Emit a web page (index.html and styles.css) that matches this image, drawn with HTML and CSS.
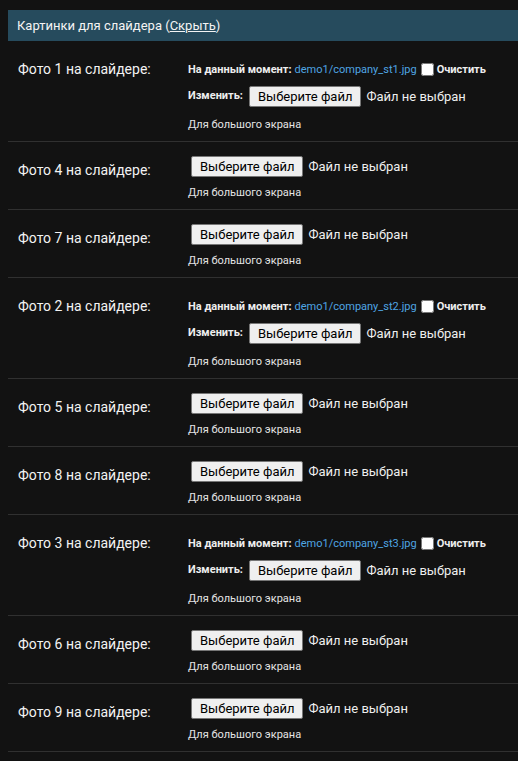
FILE: index.html
```html
<!DOCTYPE html>
<html lang="ru">
<head>
    <meta charset="UTF-8">
    <meta name="viewport" content="width=device-width, initial-scale=1.0">
    <title>Картинки для слайдера</title>
    <link rel="stylesheet" href="styles.css">
</head>
<body>

<fieldset class="module">
    <h2 class="caption">Картинки для слайдера (<a href="#" class="caption-toggle">Скрыть</a>)</h2>

    <div class="form-row">
        <label class="row-label">Фото 1 на слайдере:</label>
        <div class="field">
            <p class="current">
                <b>На данный момент:</b> <a href="#" class="file-link">demo1/company_st1.jpg</a><input type="checkbox" class="clear-box"><b>Очистить</b>
            </p>
            <p class="change">
                <b class="change-label">Изменить:</b>
                <span class="file-input"><button class="file-btn">Выберите файл</button><span class="file-name">Файл не выбран</span></span>
            </p>
            <div class="help current-help">Для большого экрана</div>
        </div>
    </div>

    <div class="form-row">
        <label class="row-label">Фото 4 на слайдере:</label>
        <div class="field">
            <span class="file-input plain"><button class="file-btn">Выберите файл</button><span class="file-name">Файл не выбран</span></span>
            <div class="help">Для большого экрана</div>
        </div>
    </div>

    <div class="form-row">
        <label class="row-label">Фото 7 на слайдере:</label>
        <div class="field">
            <span class="file-input plain"><button class="file-btn">Выберите файл</button><span class="file-name">Файл не выбран</span></span>
            <div class="help">Для большого экрана</div>
        </div>
    </div>

    <div class="form-row">
        <label class="row-label">Фото 2 на слайдере:</label>
        <div class="field">
            <p class="current">
                <b>На данный момент:</b> <a href="#" class="file-link">demo1/company_st2.jpg</a><input type="checkbox" class="clear-box"><b>Очистить</b>
            </p>
            <p class="change">
                <b class="change-label">Изменить:</b>
                <span class="file-input"><button class="file-btn">Выберите файл</button><span class="file-name">Файл не выбран</span></span>
            </p>
            <div class="help current-help">Для большого экрана</div>
        </div>
    </div>

    <div class="form-row">
        <label class="row-label">Фото 5 на слайдере:</label>
        <div class="field">
            <span class="file-input plain"><button class="file-btn">Выберите файл</button><span class="file-name">Файл не выбран</span></span>
            <div class="help">Для большого экрана</div>
        </div>
    </div>

    <div class="form-row">
        <label class="row-label">Фото 8 на слайдере:</label>
        <div class="field">
            <span class="file-input plain"><button class="file-btn">Выберите файл</button><span class="file-name">Файл не выбран</span></span>
            <div class="help">Для большого экрана</div>
        </div>
    </div>

    <div class="form-row">
        <label class="row-label">Фото 3 на слайдере:</label>
        <div class="field">
            <p class="current">
                <b>На данный момент:</b> <a href="#" class="file-link">demo1/company_st3.jpg</a><input type="checkbox" class="clear-box"><b>Очистить</b>
            </p>
            <p class="change">
                <b class="change-label">Изменить:</b>
                <span class="file-input"><button class="file-btn">Выберите файл</button><span class="file-name">Файл не выбран</span></span>
            </p>
            <div class="help current-help">Для большого экрана</div>
        </div>
    </div>

    <div class="form-row">
        <label class="row-label">Фото 6 на слайдере:</label>
        <div class="field">
            <span class="file-input plain"><button class="file-btn">Выберите файл</button><span class="file-name">Файл не выбран</span></span>
            <div class="help">Для большого экрана</div>
        </div>
    </div>

    <div class="form-row">
        <label class="row-label">Фото 9 на слайдере:</label>
        <div class="field">
            <span class="file-input plain"><button class="file-btn">Выберите файл</button><span class="file-name">Файл не выбран</span></span>
            <div class="help">Для большого экрана</div>
        </div>
    </div>
</fieldset>

</body>
</html>
```

FILE: styles.css
```css
*{
    box-sizing: border-box;
}

body{
    margin: 0;
    padding: 10px 0 0 8px;
    background-color: #121212;
    color: #eeeeee;
    font-family: Roboto, "Liberation Sans", sans-serif;
    overflow: hidden;
}

.module{
    margin: 0;
    padding: 0;
    border: none;
    min-width: 0;
}

.caption{
    margin: 0;
    height: 31px;
    padding: 0 10px 0 9px;
    display: flex;
    align-items: center;
    background-color: #264b5d;
    color: #f4f4f4;
    font-size: 13px;
    font-weight: 400;
}

.caption-toggle{
    color: #f4f4f4;
    text-decoration: underline;
}

.form-row{
    display: flex;
    padding: 14px 10px 10px 10px;
    border-bottom: 1px solid #303030;
}

.row-label{
    width: 170px;
    flex-shrink: 0;
    margin-top: 6px;
    font-size: 14px;
    line-height: 16px;
    color: #f2f2f2;
}

.field{
    display: flex;
    flex-direction: column;
    align-items: flex-start;
}

.current{
    margin: 0;
    height: 28px;
    display: flex;
    align-items: center;
    white-space: nowrap;
    font-size: 11px;
}

.current b,
.change b{
    font-weight: 700;
    color: #eeeeee;
}

.file-link{
    margin-left: 3px;
    color: #4fa5e3;
    text-decoration: none;
}

.clear-box{
    width: 13px;
    height: 13px;
    margin: 3px 3px 3px 4px;
}

.change{
    margin: 3px 0 0 0;
    display: flex;
    align-items: flex-start;
    white-space: nowrap;
    font-size: 11px;
}

.change-label{
    padding-top: 3px;
    line-height: 13px;
}

.change .file-input{
    margin-left: 6px;
}

.file-input{
    display: flex;
    align-items: center;
    white-space: nowrap;
}

.file-input.plain{
    margin-left: 3px;
}

.file-btn{
    height: 21px;
    padding: 0 8px;
    font-family: Roboto, "Liberation Sans", sans-serif;
    font-size: 13px;
    color: #000;
    background-color: #efefef;
    border: 1px solid #767676;
    border-radius: 2px;
}

.file-name{
    margin-left: 5px;
    font-size: 13px;
    line-height: 16px;
    color: #eeeeee;
}

.help{
    margin-top: 9px;
    font-size: 11px;
    line-height: 13px;
    color: #e4e4e4;
}

.current-help{
    margin-top: 11px;
}
```
